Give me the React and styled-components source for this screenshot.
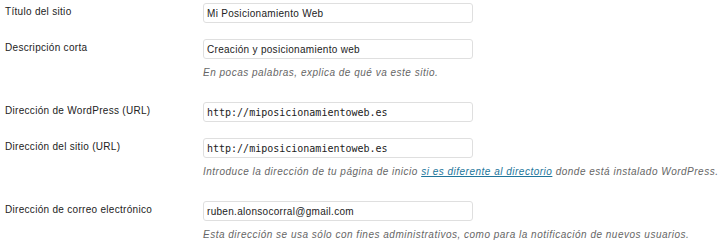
import React from 'react';
import styled, { createGlobalStyle } from 'styled-components';

const GlobalStyle = createGlobalStyle`
  html, body {
    margin: 0;
    padding: 0;
    background: #ffffff;
  }
  body {
    font-family: 'Liberation Sans', Arial, sans-serif;
    font-size: 10px;
    color: #333;
  }
`;

const FormTable = styled.div`
  display: flex;
  flex-direction: column;
  padding: 3px 0 0 5px;
  width: 722px;
  box-sizing: border-box;
`;

const Row = styled.div`
  display: grid;
  grid-template-columns: 198px 1fr;
  padding-bottom: ${(p) => (p.$hasDesc ? '22px' : '16px')};

  &:last-child {
    padding-bottom: 0;
  }
`;

const Label = styled.label`
  padding-top: 2px;
  line-height: 14px;
  letter-spacing: 0.3px;
  color: #222;
`;

const Field = styled.div`
  display: flex;
  flex-direction: column;
`;

const Input = styled.input`
  box-sizing: border-box;
  width: 270px;
  height: 20px;
  margin: 0;
  padding: 0 3px;
  border: 1px solid #dfdfdf;
  border-radius: 3px;
  background: #fff;
  color: #222;
  outline: none;
  font-family: ${(p) =>
    p.$code ? "'DejaVu Sans Mono', 'Liberation Mono', monospace" : "'Liberation Sans', Arial, sans-serif"};
  font-size: 10px;
  letter-spacing: ${(p) => (p.$code ? '0' : '0.3px')};
`;

const Description = styled.p`
  margin: 7px 0 0;
  line-height: 14px;
  font-style: italic;
  letter-spacing: 0.5px;
  color: #666;
  white-space: nowrap;

  a {
    color: #21759b;
    text-decoration: underline;
  }
`;

const fields = [
  { label: 'Título del sitio', value: 'Mi Posicionamiento Web' },
  {
    label: 'Descripción corta',
    value: 'Creación y posicionamiento web',
    description: 'En pocas palabras, explica de qué va este sitio.',
  },
  { label: 'Dirección de WordPress (URL)', value: 'http://miposicionamientoweb.es', code: true },
  {
    label: 'Dirección del sitio (URL)',
    value: 'http://miposicionamientoweb.es',
    code: true,
    description: (
      <>
        Introduce la dirección de tu página de inicio <a href="#">si es diferente al directorio</a> donde
        está instalado WordPress.
      </>
    ),
  },
  {
    label: 'Dirección de correo electrónico',
    value: 'ruben.alonsocorral@gmail.com',
    description: 'Esta dirección se usa sólo con fines administrativos, como para la notificación de nuevos usuarios.',
  },
];

export default function App() {
  return (
    <>
      <GlobalStyle />
      <FormTable>
        {fields.map((f) => (
          <Row key={f.label} $hasDesc={!!f.description}>
            <Label>{f.label}</Label>
            <Field>
              <Input type="text" defaultValue={f.value} $code={f.code} />
              {f.description && <Description>{f.description}</Description>}
            </Field>
          </Row>
        ))}
      </FormTable>
    </>
  );
}
